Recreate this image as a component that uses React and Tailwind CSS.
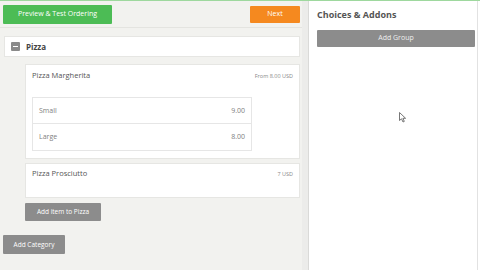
import React from "react";

const font = { fontFamily: '"Open Sans", "Liberation Sans", sans-serif' };

function Variant({ name, price, last }) {
  return (
    <div
      className={
        "flex items-center justify-between h-[26px] px-[6px] " +
        (last ? "" : "border-b border-[#e6e6e6]")
      }
    >
      <span className="text-[7px] text-[#808080]">{name}</span>
      <span className="text-[7px] text-[#808080]">{price}</span>
    </div>
  );
}

export default function App() {
  return (
    <div
      className="w-[480px] h-[270px] flex border-t border-[#9ed89e] overflow-hidden"
      style={font}
    >
      <div className="w-[302px] bg-[#f2f2ef] flex flex-col">
        <div className="h-[27px] flex items-center justify-between pl-[3px] pr-[2px] border-b border-[#e4e4e0]">
          <button className="w-[109px] h-[19px] bg-[#4cbc55] text-white text-[7px] rounded-[1px]">
            Preview &amp; Test Ordering
          </button>
          <button className="w-[50px] h-[17px] bg-[#f5891f] text-white text-[7px] rounded-[1px]">
            Next
          </button>
        </div>
        <div className="pl-[4px] pr-[2px] pt-[8px] flex flex-col">
          <div className="h-[21px] bg-white border border-[#e6e6e3] flex items-center pl-[6px] gap-[6px]">
            <span className="w-[9px] h-[9px] bg-[#8a8a8a] rounded-[1px] flex items-center justify-center">
              <span className="w-[5px] h-[1px] bg-white" />
            </span>
            <span className="text-[8px] font-bold text-[#444]">Pizza</span>
          </div>
          <div className="ml-[21px] mt-[7px] flex flex-col gap-[4px]">
            <div className="bg-white border border-[#e6e6e3] h-[95px] px-[6px] pt-[5px]">
              <div className="flex justify-between items-center">
                <span className="text-[7.5px] text-[#555]">Pizza Margherita</span>
                <span className="text-[5.5px] text-[#888]">From 8.00 USD</span>
              </div>
              <div className="mt-[16px] w-[220px] border border-[#e6e6e6] bg-white">
                <Variant name="Small" price="9.00" />
                <Variant name="Large" price="8.00" last />
              </div>
            </div>
            <div className="bg-white border border-[#e6e6e3] h-[35px] px-[6px] pt-[4px]">
              <div className="flex justify-between items-center">
                <span className="text-[7.5px] text-[#555]">Pizza Prosciutto</span>
                <span className="text-[5.5px] text-[#888]">7 USD</span>
              </div>
            </div>
            <button className="self-start mt-[1px] w-[76px] h-[18px] bg-[#8c8c8c] text-white text-[6.5px] rounded-[1px]">
              Add item to Pizza
            </button>
          </div>
          <button className="self-start -ml-[1px] mt-[14px] w-[62px] h-[19px] bg-[#8c8c8c] text-white text-[6.5px] rounded-[1px]">
            Add Category
          </button>
        </div>
      </div>
      <div className="w-[7px] bg-[#ececea] border-r border-[#dadad8]" />
      <div className="flex-1 bg-white pl-[8px] pr-[2px] border-r border-[#e2e2e2] mr-[2px] relative flex flex-col">
        <div className="h-[27px] flex items-center text-[9px] font-bold text-[#555]">
          Choices &amp; Addons
        </div>
        <button className="block mt-[2px] w-full h-[17px] bg-[#8c8c8c] text-[#eee] text-[7px] rounded-[1px]">
          Add Group
        </button>
        <svg
          className="absolute left-[90px] top-[111px]"
          width="8"
          height="11"
          viewBox="0 0 8 11"
        >
          <path
            d="M0.5 0.5 L0.5 8.5 L2.5 6.8 L4 10 L5.3 9.4 L3.9 6.3 L6.6 6.3 Z"
            fill="#fff"
            stroke="#555"
            strokeWidth="0.8"
          />
        </svg>
      </div>
    </div>
  );
}
